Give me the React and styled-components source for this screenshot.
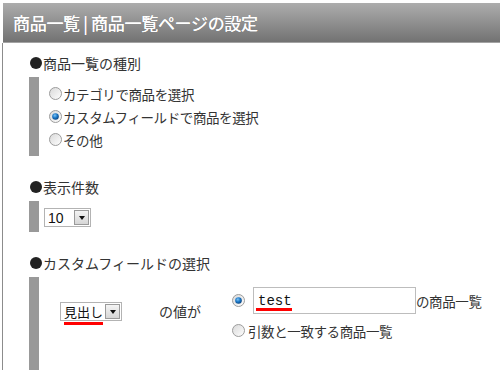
import React from "react"
import styled, { createGlobalStyle } from "styled-components"

const Global = createGlobalStyle`
	html, body {
		margin: 0;
		padding: 0;
		background: #fff;
		overflow: hidden;
	}
	body {
		font-family: "Noto Sans CJK JP", "Liberation Sans", sans-serif;
		color: #333;
		font-size: 14px;
	}
`

const Frame = styled.div`
	width: 498px;
	height: 367px;
	padding: 3px 0 0 2px;
	overflow: hidden;
	display: flex;
	flex-direction: column;
`

const Header = styled.div`
	flex-shrink: 0;
	height: 39px;
	margin-left: 1px;
	display: flex;
	align-items: center;
	padding-left: 10px;
	background: linear-gradient(#adadad, #727272);
	border-bottom: 1px solid #a3a3a3;
	color: #fff;
	font-size: 17px;
	letter-spacing: -0.3px;
	white-space: nowrap;
	text-shadow: 0 0 0.4px #fff;
`

const Body = styled.div`
	flex: 1;
	min-height: 0;
	border-left: 1px solid #8c8c8c;
	padding: 10px 0 0 26px;
`

const Heading = styled.div`
	height: 20px;
	display: flex;
	align-items: center;
	font-size: 14px;
	line-height: 20px;
	white-space: nowrap;
	margin-top: ${p => p.first ? 0 : 21}px;

	&::before {
		content: "";
		width: 12px;
		height: 12px;
		border-radius: 50%;
		background: #222;
		margin: 0 1px 0 1px;
	}
`

const Bar = styled.div`
	margin-top: 4px;
	border-left: 10px solid #999;
	padding: ${p => p.pad || "5px 0 5px 10px"};
`

const Option = styled.label`
	height: 23px;
	margin-top: ${p => p.top || 0}px;
	display: flex;
	align-items: center;
	gap: ${p => p.gap || 1}px;
	font-size: 13.5px;
	letter-spacing: -0.4px;
	white-space: nowrap;
`

const SelectBox = styled.div`
	position: relative;
	width: ${p => p.w}px;
	height: 19px;
	box-sizing: border-box;
	margin-bottom: ${p => p.lift || 0}px;
	border: 1px solid #b3b3b3;
	background: #fff;
	display: flex;
	align-items: center;
	justify-content: space-between;
	padding: 0 1px 0 3px;
	white-space: nowrap;
	font-family: ${p => p.cjk ? '"Noto Sans CJK JP", sans-serif' : '"Liberation Sans", sans-serif'};
	font-size: ${p => p.cjk ? 13 : 14}px;
	color: #111;
`

const DropButton = styled.span`
	flex-shrink: 0;
	width: 15px;
	height: 15px;
	box-sizing: border-box;
	border: 1px solid #9a9a9a;
	background: linear-gradient(#f4f4f4, #d6d6d6);
	display: flex;
	align-items: center;
	justify-content: center;

	&::after {
		content: "";
		border-left: 3.5px solid transparent;
		border-right: 3.5px solid transparent;
		border-top: 4px solid #111;
	}
`

const Mark = styled.span`
	position: absolute;
	left: ${p => p.left}px;
	width: ${p => p.w}px;
	bottom: ${p => p.bottom}px;
	height: 3px;
	background: #f00;
`

const FieldRow = styled.div`
	display: flex;
	align-items: center;
`

const ValueLabel = styled.span`
	font-size: 14px;
	margin: 0 31px 8px 37px;
	white-space: nowrap;
`

const Choices = styled.div`
	display: flex;
	flex-direction: column;
`

const TextBox = styled.div`
	position: relative;
	width: 163px;
	height: 27px;
	box-sizing: border-box;
	border: 1px solid #bdbdbd;
	margin-left: 8px;
	display: flex;
	align-items: center;
	padding-left: 4px;
	font-family: "Liberation Mono", monospace;
	font-size: 14px;
	color: #111;
`

const Radio = ({ checked }) => (
	<svg width="13" height="13" viewBox="0 0 13 13">
		<defs>
			<linearGradient id="rbg" x1="0" y1="0" x2="1" y2="1">
				<stop offset="0" stopColor="#d8d8d8" />
				<stop offset="1" stopColor="#ffffff" />
			</linearGradient>
			<radialGradient id="dot" cx="0.4" cy="0.35" r="0.7">
				<stop offset="0" stopColor="#7fc4f5" />
				<stop offset="0.5" stopColor="#1a78c8" />
				<stop offset="1" stopColor="#0b3f78" />
			</radialGradient>
		</defs>
		<circle cx="6.5" cy="6.5" r="6" fill="url(#rbg)" stroke="#9c9c9c" strokeWidth="1" />
		{checked && <circle cx="6.5" cy="6.5" r="3.3" fill="url(#dot)" />}
	</svg>
)

export default function App () {
	return <>
		<Global />
		<Frame>
			<Header>商品一覧 | 商品一覧ページの設定</Header>
			<Body>
				<Heading first>商品一覧の種別</Heading>
				<Bar>
					<Option><Radio />カテゴリで商品を選択</Option>
					<Option><Radio checked />カスタムフィールドで商品を選択</Option>
					<Option><Radio />その他</Option>
				</Bar>

				<Heading>表示件数</Heading>
				<Bar pad="7px 0 5px 5px">
					<SelectBox w={47}>10<DropButton /></SelectBox>
				</Bar>

				<Heading>カスタムフィールドの選択</Heading>
				<Bar pad="10px 0 30px 21px">
					<FieldRow>
						<SelectBox w={62} cjk lift={6}>
							見出し<DropButton />
							<Mark left={3} w={39} bottom={-5} />
						</SelectBox>
						<ValueLabel>の値が</ValueLabel>
						<Choices>
							<FieldRow>
								<Radio checked />
								<TextBox>
									test
									<Mark left={2} w={36} bottom={2} />
								</TextBox>
								<Option as="span">の商品一覧</Option>
							</FieldRow>
							<Option gap={3} top={5}><Radio />引数と一致する商品一覧</Option>
						</Choices>
					</FieldRow>
				</Bar>
			</Body>
		</Frame>
	</>
}
